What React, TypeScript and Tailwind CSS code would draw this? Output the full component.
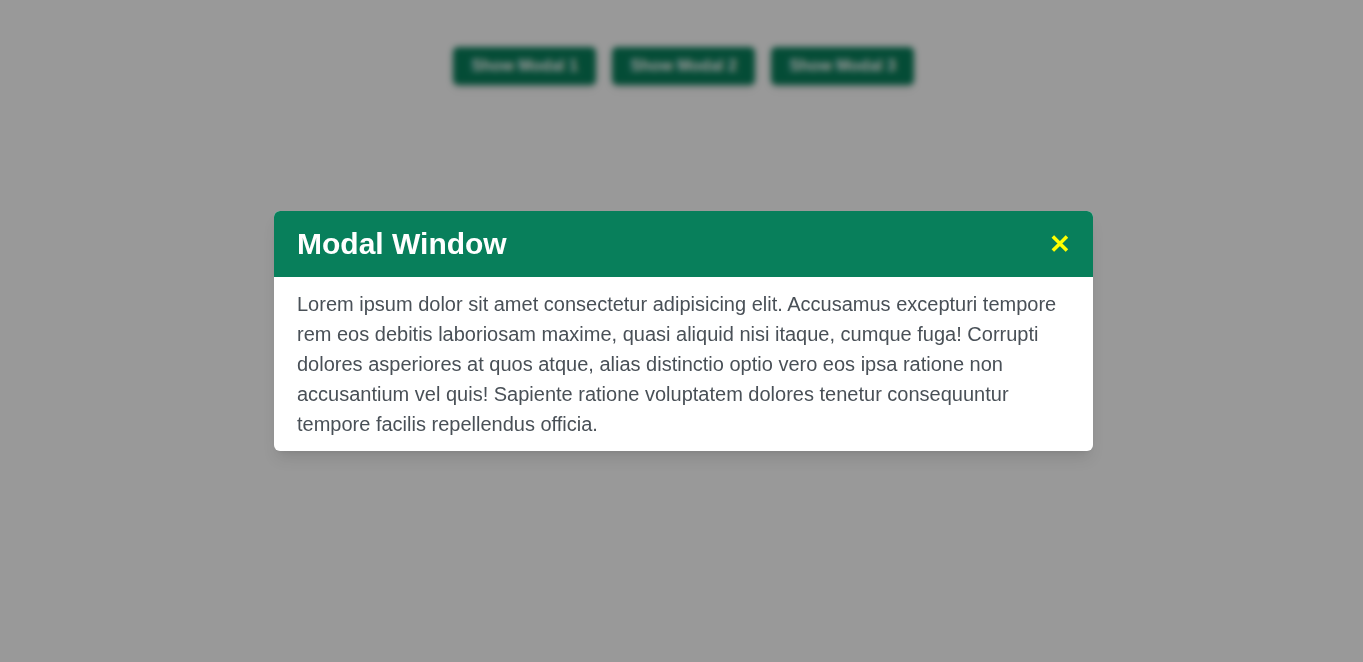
import React from "react";

export default function App() {
  const font = { fontFamily: '"Liberation Sans", Arial, sans-serif' };
  return (
    <div style={font} className="relative h-[662px] w-full overflow-hidden bg-white">
      <div className="flex justify-center gap-4 pt-[47px] pl-[4px]">
        {["Show Modal 1", "Show Modal 2", "Show Modal 3"].map((t) => (
          <button
            key={t}
            className="h-[38px] w-[143px] rounded-[5px] bg-[#087f5b] text-[16px] font-bold text-white shadow-md"
          >
            {t}
          </button>
        ))}
      </div>
      <div className="absolute inset-0 bg-black/40 backdrop-blur-[3px]" />
      <div className="absolute inset-0 flex items-center justify-center pl-[4px]">
        <div className="w-[819px] overflow-hidden rounded-[6px] bg-white shadow-lg">
          <div className="flex h-[66px] items-center justify-between bg-[#087f5b] pl-[23px] pr-[22px]">
            <h1 className="text-[30px] font-bold leading-none text-white">Modal Window</h1>
            <button className="text-[26px] font-bold leading-none text-[#ffff00]">✕</button>
          </div>
          <p className="px-[23px] pt-[12px] pb-[12px] text-[20px] leading-[30px] text-[#495057]">
            Lorem ipsum dolor sit amet consectetur adipisicing elit. Accusamus excepturi tempore
            rem eos debitis laboriosam maxime, quasi aliquid nisi itaque, cumque fuga! Corrupti
            dolores asperiores at quos atque, alias distinctio optio vero eos ipsa ratione non
            accusantium vel quis! Sapiente ratione voluptatem dolores tenetur consequuntur
            tempore facilis repellendus officia.
          </p>
        </div>
      </div>
    </div>
  );
}
